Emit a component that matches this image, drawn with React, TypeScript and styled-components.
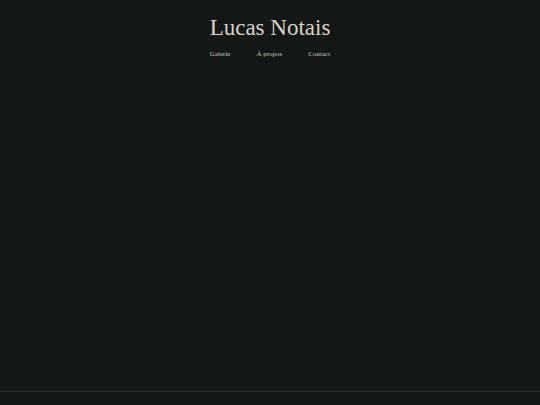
import React from "react";
import styled, { createGlobalStyle } from "styled-components";

const GlobalStyle = createGlobalStyle`
    html, body {
        margin: 0;
        padding: 0;
        background: #131715;
    }
    body {
        font-family: "Liberation Serif", "Times New Roman", serif;
        color: #d8d2c6;
    }
`;

const links = ["Galerie", "À propos", "Contact"];

export default function App() {
    return (
        <>
            <GlobalStyle />
            <Page>
                <Header>
                    <Title>Lucas Notais</Title>
                    <Nav>
                        {links.map((l) => (
                            <NavLink key={l} href="#">
                                {l}
                            </NavLink>
                        ))}
                    </Nav>
                </Header>
                <Main />
                <Footer />
            </Page>
        </>
    );
}

const Page = styled.div`
    display: flex;
    flex-direction: column;
    min-height: 100vh;
`;
const Header = styled.header`
    display: flex;
    flex-direction: column;
    align-items: center;
    padding-top: 14px;
`;
const Title = styled.h1`
    margin: 0;
    font-size: 23px;
    line-height: 27px;
    font-weight: normal;
    color: #d9d3c7;
`;
const Nav = styled.nav`
    display: flex;
    gap: 26px;
    margin-top: 8px;
`;
const NavLink = styled.a`
    font-size: 7px;
    line-height: 10px;
    color: #cfc9bd;
    text-decoration: none;
`;
const Main = styled.main`
    flex: 1;
`;
const Footer = styled.footer`
    height: 13px;
    border-top: 1px solid #252a28;
`;
